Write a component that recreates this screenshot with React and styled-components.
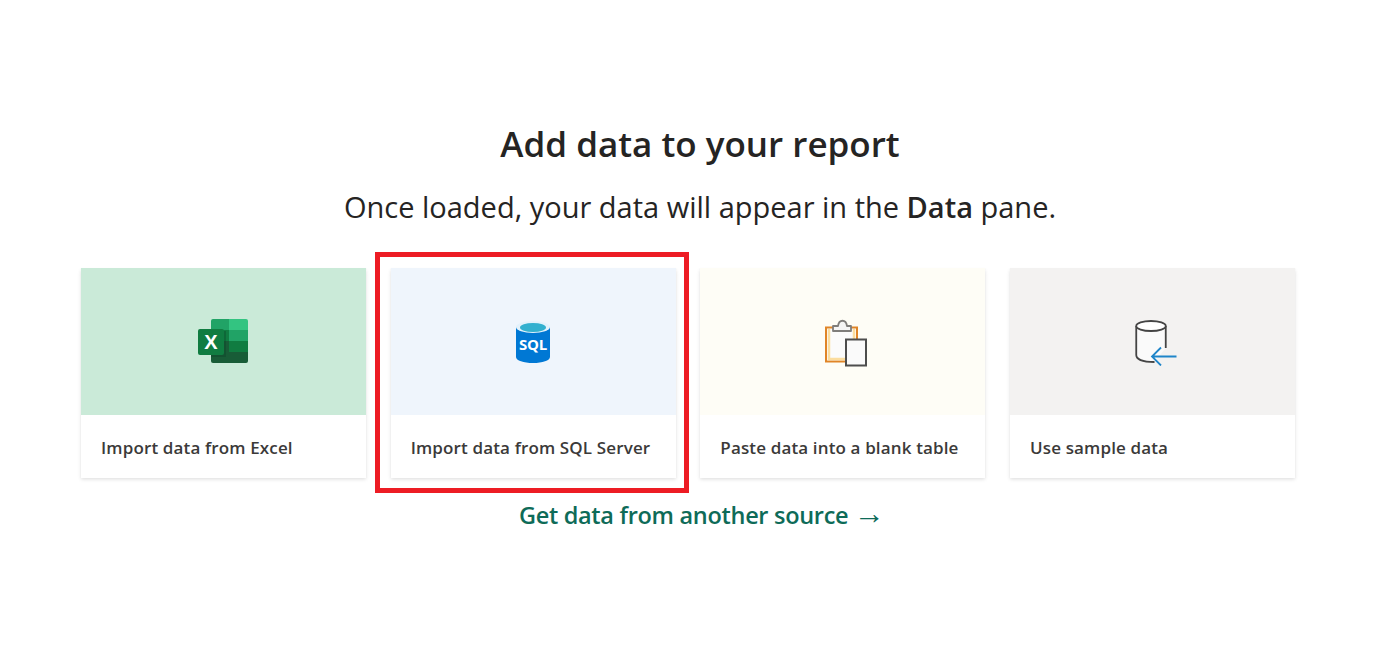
import React from "react";
import styled, { createGlobalStyle } from "styled-components";

const Global = createGlobalStyle`
    html, body {
        margin: 0;
        padding: 0;
        background: #fff;
    }
`;

const Page = styled.div`
    width: 1400px;
    height: 653px;
    box-sizing: border-box;
    padding-top: 122px;
    overflow: hidden;
    display: flex;
    flex-direction: column;
    align-items: center;
    font-family: "Open Sans", "Noto Sans", sans-serif;
    color: #252423;
`;

const Title = styled.h1`
    margin: 0;
    font-size: 35px;
    line-height: 44px;
    font-weight: 600;
`;

const Subtitle = styled.p`
    margin: 19px 0 0;
    font-size: 29px;
    line-height: 44px;
    font-weight: 400;

    b {
        font-weight: 600;
    }
`;

const Cards = styled.div`
    margin-top: 39px;
    margin-left: -24px;
    display: grid;
    grid-template-columns: repeat(4, 285px);
    column-gap: 24.67px;
`;

const Card = styled.div`
    position: relative;
    height: 210px;
    background: #fff;
    box-shadow: 0 1.6px 3.6px rgba(0, 0, 0, 0.13), 0 0.3px 0.9px rgba(0, 0, 0, 0.11);
    display: flex;
    flex-direction: column;
`;

const Thumb = styled.div`
    height: 147px;
    background: ${(p) => p.$bg};
    display: flex;
    align-items: center;
    justify-content: center;
`;

const Label = styled.div`
    flex: 1;
    padding: 2px 0 0 20px;
    display: flex;
    align-items: center;
    font-size: 17px;
    font-weight: 600;
    color: #3b3a39;
    letter-spacing: 0.14px;
`;

const Highlight = styled.div`
    position: absolute;
    top: -16px;
    left: -16px;
    right: -13px;
    bottom: -15px;
    border: 5px solid #ed1c24;
    pointer-events: none;
`;

const MoreLink = styled.a`
    margin-top: 17px;
    margin-left: 4px;
    font-size: 23.5px;
    line-height: 40px;
    font-weight: 600;
    color: #0e6b58;
    text-decoration: none;
    letter-spacing: -0.3px;
`;

const Arrow = styled.span`
    font-family: "Liberation Sans", sans-serif;
    font-size: 31px;
    line-height: 0;
    font-weight: 400;
    letter-spacing: 0;
`;

const ExcelIcon = () => (
    <svg width="51" height="45" viewBox="0 0 51 45">
        <path d="M13 2a2 2 0 0 1 2-2h16v11H13z" fill="#21a366" />
        <path d="M31 0h17a2 2 0 0 1 2 2v9H31z" fill="#33c481" />
        <rect x="13" y="11" width="18" height="11" fill="#107c41" />
        <rect x="31" y="11" width="19" height="11" fill="#21a366" />
        <rect x="13" y="22" width="18" height="11" fill="#185c37" />
        <rect x="31" y="22" width="19" height="11" fill="#107c41" />
        <path d="M13 33h37v9a2 2 0 0 1-2 2H15a2 2 0 0 1-2-2z" fill="#185c37" />
        <rect x="13" y="12" width="15" height="26" fill="#0a3d24" opacity="0.3" />
        <rect x="0" y="10" width="26" height="26" rx="2" fill="#107c41" />
        <text x="13" y="30" textAnchor="middle" fontFamily="Liberation Sans" fontSize="20" fontWeight="700" fill="#fff">X</text>
    </svg>
);

const SqlIcon = () => (
    <svg width="36" height="44" viewBox="0 0 36 44">
        <path d="M1 7v30c0 3.500 7.600 6 17 6s17-2.500 17-6V7z" fill="#0078d4" />
        <ellipse cx="18" cy="7" rx="17" ry="6" fill="#e3f2fb" />
        <ellipse cx="18" cy="7.500" rx="13" ry="4.500" fill="#32b0cf" />
        <text x="18" y="30" textAnchor="middle" fontFamily="Open Sans" fontSize="15" fontWeight="700" letterSpacing="-0.3" fill="#fff">SQL</text>
    </svg>
);

const PasteIcon = () => (
    <svg width="49" height="50" viewBox="0 0 49 50">
        <rect x="8" y="10.500" width="31" height="34" fill="#fbfbfb" stroke="#e08527" strokeWidth="2" />
        <path d="M11 12v30h25V12" fill="none" stroke="#fbdd9f" strokeWidth="2.500" />
        <path d="M15 14V9h5c1-7 8-7 9 0h4v5z" fill="#f5f5f5" stroke="#7f7d7b" strokeWidth="1.800" strokeLinejoin="round" />
        <rect x="28" y="22.500" width="20" height="26" fill="#fafafa" stroke="#4d4d4d" strokeWidth="2" />
    </svg>
);

const SampleIcon = () => (
    <svg width="54" height="48" viewBox="0 0 54 48">
        <path d="M11.250 8h29.500v22L29.500 44C17 44 11.250 41 11.250 37z" fill="#fafafa" />
        <path d="M11.250 8v29c0 4 6 7 18.250 7" fill="none" stroke="#444" strokeWidth="1.800" />
        <path d="M40.750 8v22" fill="none" stroke="#444" strokeWidth="1.800" />
        <ellipse cx="26" cy="8" rx="14.750" ry="5" fill="#fff" stroke="#444" strokeWidth="1.800" />
        <path d="M51.500 38.500H27.500M36 29.500l-9 9 9 9" fill="none" stroke="#1f85c9" strokeWidth="1.800" />
    </svg>
);

const sources = [
    { label: "Import data from Excel", bg: "#caead8", icon: <ExcelIcon /> },
    { label: "Import data from SQL Server", bg: "#eff5fc", icon: <SqlIcon />, marked: true },
    { label: "Paste data into a blank table", bg: "#fefdf6", icon: <PasteIcon /> },
    { label: "Use sample data", bg: "#f3f2f1", icon: <SampleIcon /> },
];

const App = () => {
    return (
        <Page>
            <Global />
            <Title>Add data to your report</Title>
            <Subtitle>Once loaded, your data will appear in the <b>Data</b> pane.</Subtitle>
            <Cards>
                {sources.map((s) => (
                    <Card key={s.label}>
                        <Thumb $bg={s.bg}>{s.icon}</Thumb>
                        <Label>{s.label}</Label>
                        {s.marked && <Highlight />}
                    </Card>
                ))}
            </Cards>
            <MoreLink href="#">Get data from another source <Arrow>→</Arrow></MoreLink>
        </Page>
    );
};

export default App;
